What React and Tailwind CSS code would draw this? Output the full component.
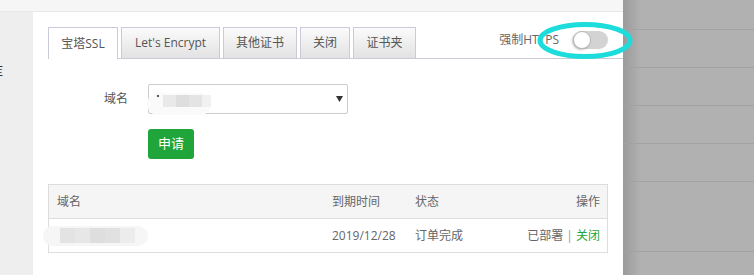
export default function App() {
  const tabBase =
    "h-[31px] flex items-center justify-center border border-b-0 border-[#cbcad9] text-[12px] text-[#555] shrink-0";
  const inactive = "bg-gradient-to-b from-[#fbfbfb] to-[#e2e2e2]";
  return (
    <div className="w-[754px] h-[275px] flex overflow-hidden relative bg-white font-['Open_Sans','Noto_Sans_CJK_SC',sans-serif]">
      <div className="w-[623px] flex flex-col shrink-0">
        <div className="h-[12px] bg-[#f6f6f6] border-b border-[#e7e7e7] shrink-0" />
        <div className="flex flex-1">
          <div className="w-[33px] bg-[#eeeeee] overflow-hidden shrink-0">
            <div className="mt-[51px] -ml-[10px] text-[13px] text-[#333] leading-[16px]">库</div>
          </div>
          <div className="flex-1 bg-white pl-[15px] pr-[16px] pt-[15px]">
            {/* tab bar */}
            <div className="h-[32px] flex items-start gap-[3px] border-b border-[#cbcad9] -mr-[16px] pr-[16px]">
              <div className={`${tabBase} w-[70px] h-[32px] bg-white text-[#444]`}>宝塔SSL</div>
              <div className={`${tabBase} ${inactive} w-[99px]`}>Let's Encrypt</div>
              <div className={`${tabBase} ${inactive} w-[74px]`}>其他证书</div>
              <div className={`${tabBase} ${inactive} w-[50px]`}>关闭</div>
              <div className={`${tabBase} ${inactive} w-[63px]`}>证书夹</div>
              <div className="ml-auto mt-[4px] h-[18px] flex items-center gap-[14px]">
                <span className="text-[12px] text-[#666]">强制HTTPS</span>
                <div className="w-[35px] h-[18px] rounded-full bg-[#d3d3d3] flex items-center">
                  <div className="w-[18px] h-[18px] rounded-full bg-white border border-[#b8b8b8] shadow-[-1px_1px_2px_rgba(0,0,0,0.25)]" />
                </div>
              </div>
            </div>

            {/* form */}
            <div className="mt-[25px] flex items-center h-[30px]">
              <div className="w-[80px] text-right text-[12px] text-[#555]">域名</div>
              <div className="ml-[20px] w-[200px] h-[30px] border border-[#cccccc] rounded-[2px] flex items-center justify-between pr-[4px]">
                <div className="translate-y-[5px] -ml-[2px] h-[22px] w-[64px] rounded-full bg-[#fafafa] flex items-start pt-[2px] pl-[10px] blur-[0.6px]">
                  <div className="w-[2px] h-[2px] bg-[#555] mt-[0px] mr-[4px]" />
                  <div className="w-[15px] h-[12px] bg-[#e9e9e9]" />
                  <div className="w-[15px] h-[12px] bg-[#dedede]" />
                  <div className="w-[15px] h-[12px] bg-[#e4e4e4]" />
                  <div className="w-[10px] h-[12px] bg-[#f1f1f1]" />
                </div>
                <svg width="7" height="6" viewBox="0 0 7 6">
                  <path d="M0 0 H7 L3.5 6 Z" fill="#333" />
                </svg>
              </div>
            </div>

            <button className="mt-[15px] ml-[100px] w-[46px] h-[30px] bg-[#20a53a] text-white text-[13px] rounded-[3px] flex items-center justify-center">
              申请
            </button>

            {/* table */}
            <div className="mt-[25px] w-[560px] border border-[#dddddd] text-[12px] text-[#666]">
              <div className="h-[34px] bg-[#f5f5f5] border-b border-[#dddddd] flex items-center">
                <div className="w-[275px] pl-[8px]">域名</div>
                <div className="w-[83px] pl-[8px]">到期时间</div>
                <div className="flex-1 pl-[8px]">状态</div>
                <div className="w-[100px] text-right pr-[7px]">操作</div>
              </div>
              <div className="h-[33px] flex items-center">
                <div className="w-[275px] pl-[8px] flex">
                  <div className="-ml-[14px] h-[20px] w-[105px] rounded-full bg-[#f6f6f6] flex items-center pl-[17px] blur-[0.6px]">
                    <div className="w-[15px] h-[15px] bg-[#e3e3e3]" />
                    <div className="w-[15px] h-[15px] bg-[#e7e7e7]" />
                    <div className="w-[15px] h-[15px] bg-[#dedede]" />
                    <div className="w-[15px] h-[15px] bg-[#e1e1e1]" />
                    <div className="w-[15px] h-[15px] bg-[#ececec]" />
                  </div>
                </div>
                <div className="w-[83px] pl-[8px]">2019/12/28</div>
                <div className="flex-1 pl-[8px]">订单完成</div>
                <div className="w-[100px] text-right pr-[7px]">
                  已部署 <span className="text-[#999]">|</span> <span className="text-[#20a53a]">关闭</span>
                </div>
              </div>
            </div>
          </div>
        </div>
      </div>

      {/* dimmed background on the right */}
      <div className="flex-1 flex flex-col bg-[linear-gradient(to_right,#9b9b9b,#b1b1b1_18px)]">
        <div className="h-[30px] border-b border-[#a2a2a2] shrink-0" />
        <div className="h-[38px] border-b border-[#a2a2a2] shrink-0" />
        <div className="h-[38px] border-b border-[#a2a2a2] shrink-0" />
        <div className="h-[38px] border-b border-[#a2a2a2] shrink-0" />
        <div className="h-[38px] border-b border-[#a2a2a2] shrink-0" />
        <div className="h-[70px] border-b border-[#a2a2a2] shrink-0" />
      </div>

      {/* annotation ellipse */}
      <svg
        className="absolute left-[535px] top-[20px] pointer-events-none"
        width="100"
        height="41"
        viewBox="0 0 100 41"
      >
        <ellipse cx="50" cy="20.5" rx="45" ry="16" fill="none" stroke="#1cdcdc" strokeWidth="5" />
      </svg>
    </div>
  );
}
